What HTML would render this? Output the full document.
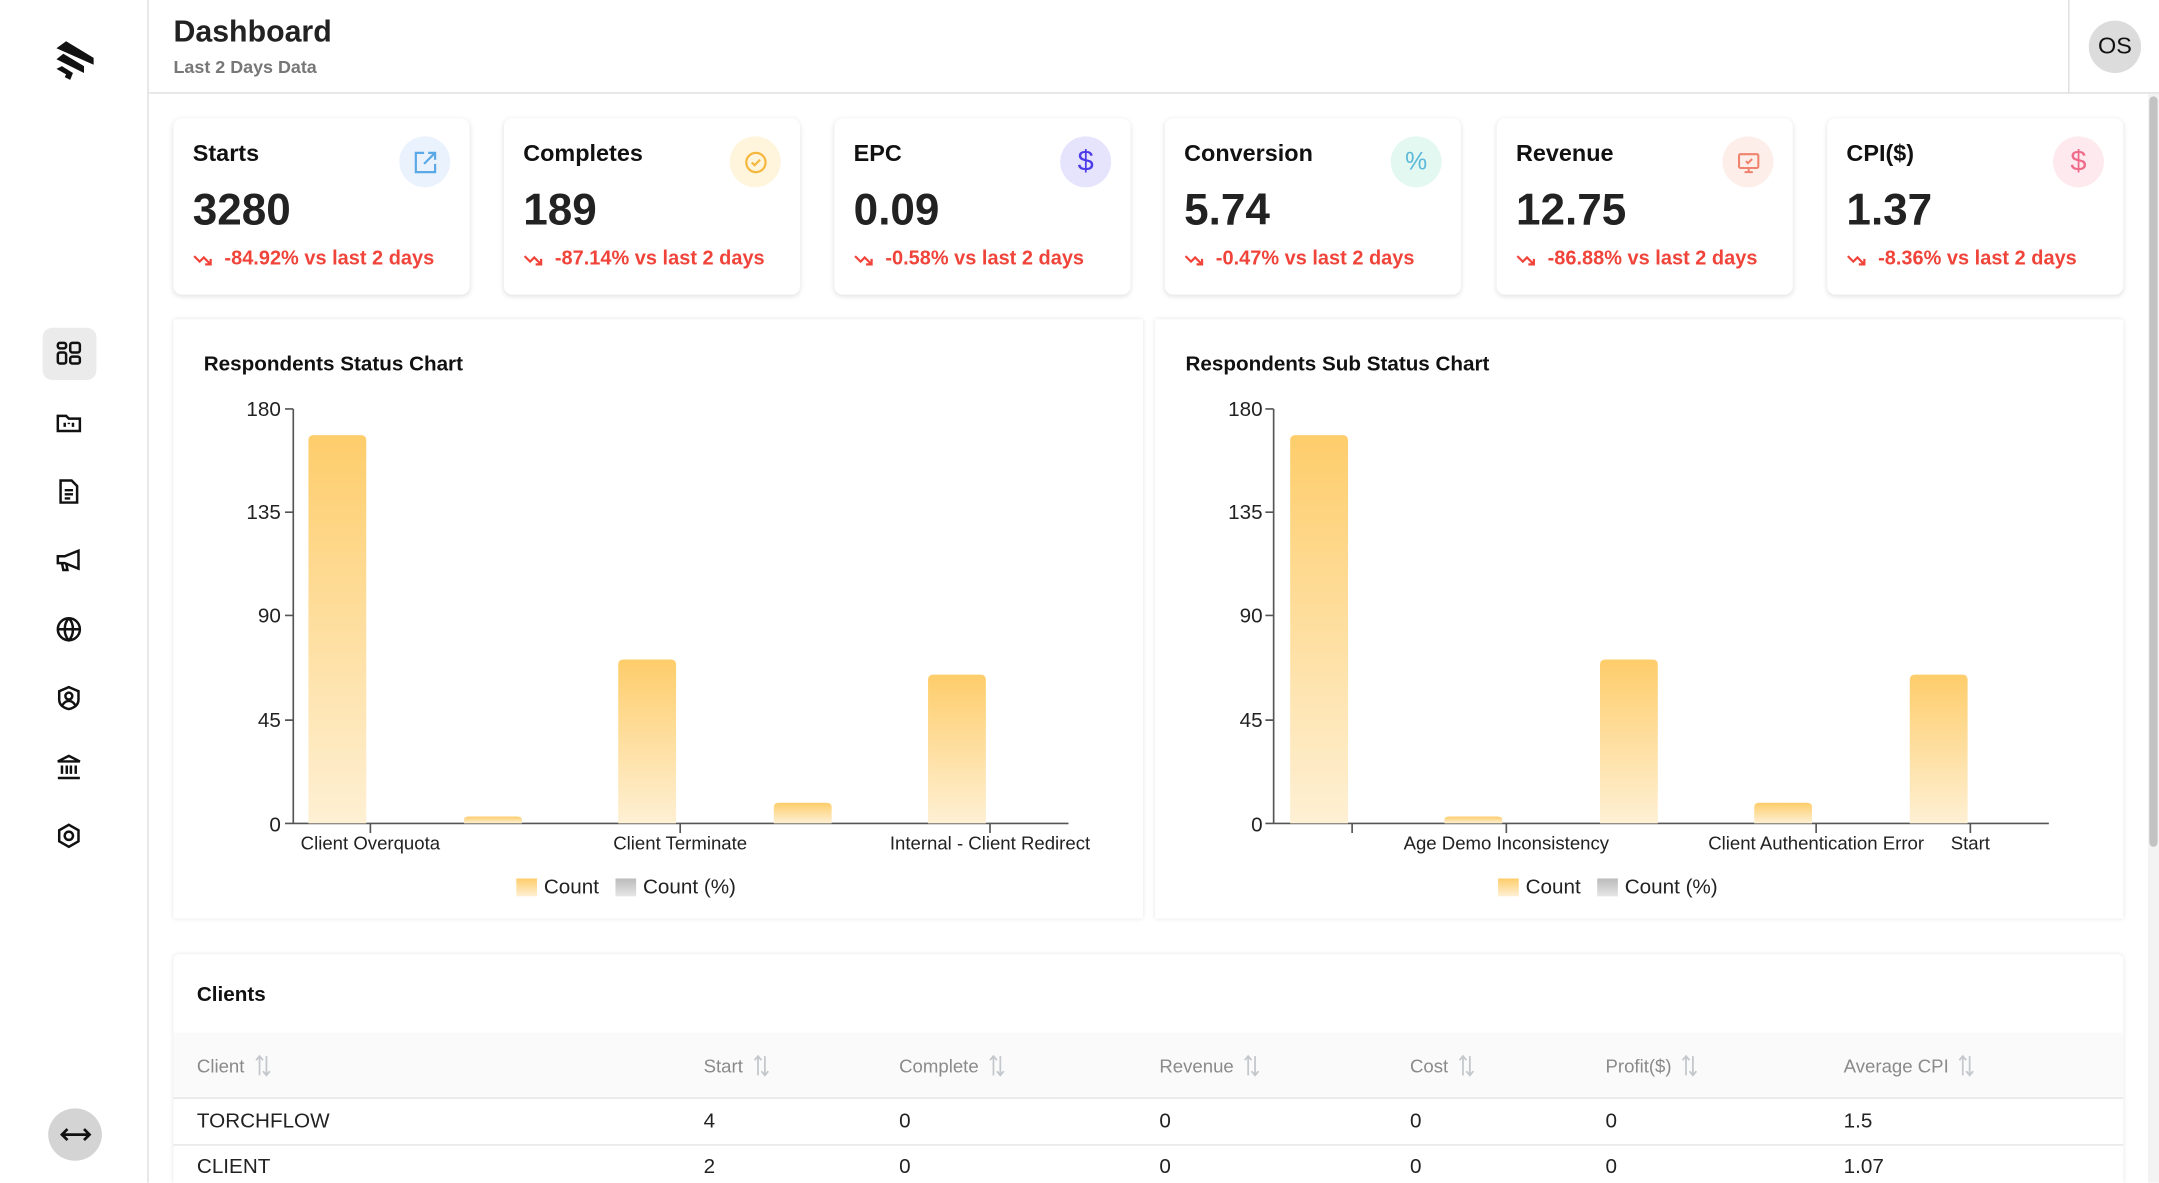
<!DOCTYPE html>
<html><head><meta charset="utf-8"><style>
*{box-sizing:border-box;margin:0;padding:0}
html,body{width:2159px;height:1183px;overflow:hidden;background:#fff;font-family:"Liberation Sans",Arial,sans-serif;color:#1f1f1f}
#w{position:absolute;left:0;top:0;width:1568px;height:859px;transform:scale(1.37691);transform-origin:0 0;overflow:hidden}
.abs{position:absolute}
.side{left:0;top:0;width:108px;height:859px;border-right:1px solid #ddd}
.hdr{left:108px;top:0;width:1460px;height:68px;border-bottom:1px solid #ddd}
.card{position:absolute;top:86px;width:215px;height:128px;background:#fff;border-radius:6px;box-shadow:0 1px 4px rgba(0,0,0,.12)}
.card .t{position:absolute;left:14px;top:16px;font-size:17px;font-weight:bold;color:#111}
.card .v{position:absolute;left:14px;top:48px;font-size:32px;font-weight:bold;color:#222}
.card .c{position:absolute;left:14px;top:94px;font-size:14.5px;font-weight:bold;color:#f0443a;white-space:nowrap}
.card .c svg{vertical-align:-2px;margin-right:8px}
.card .i{position:absolute;right:14px;top:13px;width:37px;height:37px;border-radius:50%;display:flex;align-items:center;justify-content:center}
.th{position:absolute;top:766px;font-size:13.5px;color:#8a8a8a;white-space:nowrap}
.th svg{vertical-align:-3px;margin-left:7px}
.td{position:absolute;font-size:15px;color:#222}
</style></head><body><div id="w">
<div class="abs side">
<svg class="abs" style="left:38px;top:27px" width="32" height="32" viewBox="0 0 32 32"><path d="M3 8 L10 3 L30 15 L30 20 Z" fill="#111"/><path d="M3 16 L8 12 L23 21 L23 26 Z" fill="#111"/><path d="M3 23 L7 21 L15 26 L13 31 L9 29 L10 27 Z" fill="#111"/></svg>
<div class="abs" style="left:31px;top:238px;width:39px;height:38px;background:#ebebeb;border-radius:7px"></div>
<svg class="abs" style="left:40px;top:247px" width="20" height="20" viewBox="0 0 20 20" fill="none" stroke="#111" stroke-width="1.8"><rect x="2" y="2" width="6" height="4" rx="1.5"/><rect x="2" y="9" width="6" height="8" rx="1.5"/><rect x="11" y="2" width="7" height="7" rx="1.5"/><rect x="11" y="12" width="7" height="5" rx="1.5"/></svg>
<svg class="abs" style="left:40px;top:297px" width="20" height="20" viewBox="0 0 20 20" fill="none" stroke="#111" stroke-width="1.8"><path d="M2 5 h6 l2 2 h8 v9 h-16 z"/><path d="M7 10v3M10 10v1M13 10v3"/></svg>
<svg class="abs" style="left:40px;top:347px" width="20" height="20" viewBox="0 0 20 20" fill="none" stroke="#111" stroke-width="1.8"><path d="M4 2h8l4 4v12h-12z"/><path d="M7 9h6M7 12h6M7 15h4"/></svg>
<svg class="abs" style="left:40px;top:397px" width="20" height="20" viewBox="0 0 20 20" fill="none" stroke="#111" stroke-width="1.8"><path d="M2 7h5l10-4v13l-10-4h-5z"/><path d="M5 12l1 5h3l-1-5"/></svg>
<svg class="abs" style="left:40px;top:447px" width="20" height="20" viewBox="0 0 20 20" fill="none" stroke="#111" stroke-width="1.8"><circle cx="10" cy="10" r="8"/><path d="M2 10h16M10 2c-4 4-4 12 0 16c4-4 4-12 0-16"/></svg>
<svg class="abs" style="left:40px;top:497px" width="20" height="20" viewBox="0 0 20 20" fill="none" stroke="#111" stroke-width="1.8"><path d="M10 2l7 3v6c0 4-3 6-7 7c-4-1-7-3-7-7v-6z"/><circle cx="10" cy="8.5" r="2.5"/><path d="M5.5 15c1-2 3-3 4.5-3s3.5 1 4.5 3"/></svg>
<svg class="abs" style="left:40px;top:547px" width="20" height="20" viewBox="0 0 20 20" fill="none" stroke="#111" stroke-width="1.8"><path d="M2 6l8-4 8 4z"/><path d="M5 9v6M8.5 9v6M11.5 9v6M15 9v6M2 18h16"/></svg>
<svg class="abs" style="left:40px;top:597px" width="20" height="20" viewBox="0 0 20 20" fill="none" stroke="#111" stroke-width="1.8"><path d="M10 2l7 4v8l-7 4l-7-4v-8z"/><circle cx="10" cy="10" r="3"/></svg>
<div class="abs" style="left:35px;top:805px;width:39px;height:38px;border-radius:50%;background:#d4d4d4"></div>
<svg class="abs" style="left:43px;top:815px" width="24" height="18" viewBox="0 0 24 18" fill="none" stroke="#111" stroke-width="2"><path d="M2 9h20M6 5l-4 4 4 4M18 5l4 4-4 4"/></svg>
</div>
<div class="abs hdr">
<div class="abs" style="left:18px;top:10px;font-size:22px;font-weight:bold;color:#222">Dashboard</div>
<div class="abs" style="left:18px;top:41px;font-size:13px;font-weight:bold;color:#777">Last 2 Days Data</div>
<div class="abs" style="left:1394px;top:0;width:1px;height:68px;background:#ddd"></div>
<div class="abs" style="left:1409px;top:15px;width:38px;height:38px;border-radius:50%;background:#dcdcdc;font-size:17px;line-height:38px;text-align:center;color:#111">OS</div>
</div>
<div class="abs" style="left:1560px;top:68px;width:8px;height:791px;background:#f3f3f3"></div>
<div class="abs" style="left:1561px;top:70px;width:6px;height:545px;background:#c2c2c2;border-radius:3px"></div>

<div class="card" style="left:126px"><div class="t">Starts</div><div class="v">3280</div><div class="c"><svg width="15" height="10" viewBox="0 0 15 10" fill="none" stroke="#f0443a" stroke-width="1.6"><path d="M1 2l4 4 3-3 5 5M9 8h4v-4"/></svg>-84.92% vs last 2 days</div><div class="i" style="background:#eaf2fd"><svg width="18" height="18" viewBox="0 0 18 18" fill="none" stroke="#5aa9e6" stroke-width="1.6"><path d="M8 2h-6v14h14v-6M11 2h5v5M16 2l-8 8"/></svg></div></div>
<div class="card" style="left:366px"><div class="t">Completes</div><div class="v">189</div><div class="c"><svg width="15" height="10" viewBox="0 0 15 10" fill="none" stroke="#f0443a" stroke-width="1.6"><path d="M1 2l4 4 3-3 5 5M9 8h4v-4"/></svg>-87.14% vs last 2 days</div><div class="i" style="background:#fff4dc"><svg width="18" height="18" viewBox="0 0 18 18" fill="none" stroke="#f5b83d" stroke-width="1.6"><circle cx="9" cy="9" r="7"/><path d="M6 9l2 2 4-4"/></svg></div></div>
<div class="card" style="left:606px"><div class="t">EPC</div><div class="v">0.09</div><div class="c"><svg width="15" height="10" viewBox="0 0 15 10" fill="none" stroke="#f0443a" stroke-width="1.6"><path d="M1 2l4 4 3-3 5 5M9 8h4v-4"/></svg>-0.58% vs last 2 days</div><div class="i" style="background:#e6e3fd;color:#4b3be8;font-size:21px">$</div></div>
<div class="card" style="left:846px"><div class="t">Conversion</div><div class="v">5.74</div><div class="c"><svg width="15" height="10" viewBox="0 0 15 10" fill="none" stroke="#f0443a" stroke-width="1.6"><path d="M1 2l4 4 3-3 5 5M9 8h4v-4"/></svg>-0.47% vs last 2 days</div><div class="i" style="background:#e2f8f1;color:#5bb8d8;font-size:18px">%</div></div>
<div class="card" style="left:1087px"><div class="t">Revenue</div><div class="v">12.75</div><div class="c"><svg width="15" height="10" viewBox="0 0 15 10" fill="none" stroke="#f0443a" stroke-width="1.6"><path d="M1 2l4 4 3-3 5 5M9 8h4v-4"/></svg>-86.88% vs last 2 days</div><div class="i" style="background:#fdeee9"><svg width="18" height="18" viewBox="0 0 18 18" fill="none" stroke="#f0836e" stroke-width="1.5"><rect x="2" y="3" width="14" height="10" rx="1"/><path d="M9 13v3M6 16h6M7 8l1.5 1.5 3-3"/></svg></div></div>
<div class="card" style="left:1327px"><div class="t">CPI($)</div><div class="v">1.37</div><div class="c"><svg width="15" height="10" viewBox="0 0 15 10" fill="none" stroke="#f0443a" stroke-width="1.6"><path d="M1 2l4 4 3-3 5 5M9 8h4v-4"/></svg>-8.36% vs last 2 days</div><div class="i" style="background:#fde9ee;color:#f06a8a;font-size:21px">$</div></div>

<svg class="abs" style="left:0;top:0" width="1568" height="859">
<defs><linearGradient id="g" x1="0" y1="0" x2="0" y2="1"><stop offset="0" stop-color="#fecd6b"/><stop offset="1" stop-color="#fef0d4"/></linearGradient>
<linearGradient id="gg" x1="0" y1="0" x2="0" y2="1"><stop offset="0" stop-color="#bbb"/><stop offset="1" stop-color="#e6e6e6"/></linearGradient>
<filter id="sh"><feDropShadow dx="0" dy="0" stdDeviation="1.5" flood-opacity=".12"/></filter></defs>
<rect x="126" y="232" width="704" height="435" fill="#fff" filter="url(#sh)"/>
<rect x="839" y="232" width="703" height="435" fill="#fff" filter="url(#sh)"/>
<rect x="126" y="693" width="1416" height="180" rx="4" fill="#fff" filter="url(#sh)"/>
<g font-family="Liberation Sans, Arial, sans-serif">
<text x="148" y="269" font-size="15" font-weight="bold" fill="#111">Respondents Status Chart</text>
<text x="861" y="269" font-size="15" font-weight="bold" fill="#111">Respondents Sub Status Chart</text>
<g font-size="15" fill="#222" text-anchor="end">
<text x="204" y="302">180</text><text x="204" y="377">135</text><text x="204" y="452">90</text><text x="204" y="528">45</text><text x="204" y="604">0</text>
<text x="917" y="302">180</text><text x="917" y="377">135</text><text x="917" y="452">90</text><text x="917" y="528">45</text><text x="917" y="604">0</text>
</g>
<g stroke="#555" stroke-width="1.2" fill="none">
<path d="M213 297V598H776M207 297h6M207 372h6M207 447h6M207 523h6M207 598h6M269 598v7M494 598v7M719 598v7"/>
<path d="M925 297V598H1488M919 297h6M919 372h6M919 447h6M919 523h6M919 598h6M982 598v7M1094 598v7M1319 598v7M1431 598v7"/>
</g>
<g fill="url(#g)">
<path d="M224 598V320q0-4 4-4h34q4 0 4 4V598z"/><path d="M337 598V595q0-2 4-2h34q4 0 4 2V598z"/><path d="M449 598V483q0-4 4-4h34q4 0 4 4V598z"/><path d="M562 598V586q0-3 4-3h34q4 0 4 3V598z"/><path d="M674 598V494q0-4 4-4h34q4 0 4 4V598z"/>
<path d="M937 598V320q0-4 4-4h34q4 0 4 4V598z"/><path d="M1049 598V595q0-2 4-2h34q4 0 4 2V598z"/><path d="M1162 598V483q0-4 4-4h34q4 0 4 4V598z"/><path d="M1274 598V586q0-3 4-3h34q4 0 4 3V598z"/><path d="M1387 598V494q0-4 4-4h34q4 0 4 4V598z"/>
</g>
<g font-size="13.5" fill="#222" text-anchor="middle">
<text x="269" y="617">Client Overquota</text><text x="494" y="617">Client Terminate</text><text x="719" y="617">Internal - Client Redirect</text>
<text x="1094" y="617">Age Demo Inconsistency</text><text x="1319" y="617">Client Authentication Error</text><text x="1431" y="617">Start</text>
</g>
<g font-size="15" fill="#222">
<rect x="375" y="638" width="15" height="13" fill="url(#g)"/><text x="395" y="649">Count</text>
<rect x="447" y="638" width="15" height="13" fill="url(#gg)"/><text x="467" y="649">Count (%)</text>
<rect x="1088" y="638" width="15" height="13" fill="url(#g)"/><text x="1108" y="649">Count</text>
<rect x="1160" y="638" width="15" height="13" fill="url(#gg)"/><text x="1180" y="649">Count (%)</text>
</g>
<text x="143" y="727" font-size="15" font-weight="bold" fill="#111">Clients</text>
</g>
<rect x="126" y="750" width="1416" height="47" fill="#fafafa"/>
<path d="M126 797.5H1542M126 831.5H1542" stroke="#e3e3e3"/>
</svg>
<div class="th" style="left:143px">Client<svg width="12" height="16" viewBox="0 0 12 16" fill="none" stroke="#c4c8cc" stroke-width="1.3"><path d="M3.5 15V1M1 4l2.5-3 2.5 3M8.5 1v14M6 12l2.5 3 2.5-3"/></svg></div>
<div class="th" style="left:511px">Start<svg width="12" height="16" viewBox="0 0 12 16" fill="none" stroke="#c4c8cc" stroke-width="1.3"><path d="M3.5 15V1M1 4l2.5-3 2.5 3M8.5 1v14M6 12l2.5 3 2.5-3"/></svg></div>
<div class="th" style="left:653px">Complete<svg width="12" height="16" viewBox="0 0 12 16" fill="none" stroke="#c4c8cc" stroke-width="1.3"><path d="M3.5 15V1M1 4l2.5-3 2.5 3M8.5 1v14M6 12l2.5 3 2.5-3"/></svg></div>
<div class="th" style="left:842px">Revenue<svg width="12" height="16" viewBox="0 0 12 16" fill="none" stroke="#c4c8cc" stroke-width="1.3"><path d="M3.5 15V1M1 4l2.5-3 2.5 3M8.5 1v14M6 12l2.5 3 2.5-3"/></svg></div>
<div class="th" style="left:1024px">Cost<svg width="12" height="16" viewBox="0 0 12 16" fill="none" stroke="#c4c8cc" stroke-width="1.3"><path d="M3.5 15V1M1 4l2.5-3 2.5 3M8.5 1v14M6 12l2.5 3 2.5-3"/></svg></div>
<div class="th" style="left:1166px">Profit($)<svg width="12" height="16" viewBox="0 0 12 16" fill="none" stroke="#c4c8cc" stroke-width="1.3"><path d="M3.5 15V1M1 4l2.5-3 2.5 3M8.5 1v14M6 12l2.5 3 2.5-3"/></svg></div>
<div class="th" style="left:1339px">Average CPI<svg width="12" height="16" viewBox="0 0 12 16" fill="none" stroke="#c4c8cc" stroke-width="1.3"><path d="M3.5 15V1M1 4l2.5-3 2.5 3M8.5 1v14M6 12l2.5 3 2.5-3"/></svg></div>
<div class="td" style="left:143px;top:806px">TORCHFLOW</div><div class="td" style="left:511px;top:806px">4</div><div class="td" style="left:653px;top:806px">0</div><div class="td" style="left:842px;top:806px">0</div><div class="td" style="left:1024px;top:806px">0</div><div class="td" style="left:1166px;top:806px">0</div><div class="td" style="left:1339px;top:806px">1.5</div>
<div class="td" style="left:143px;top:839px">CLIENT</div><div class="td" style="left:511px;top:839px">2</div><div class="td" style="left:653px;top:839px">0</div><div class="td" style="left:842px;top:839px">0</div><div class="td" style="left:1024px;top:839px">0</div><div class="td" style="left:1166px;top:839px">0</div><div class="td" style="left:1339px;top:839px">1.07</div>
</div></body></html>
